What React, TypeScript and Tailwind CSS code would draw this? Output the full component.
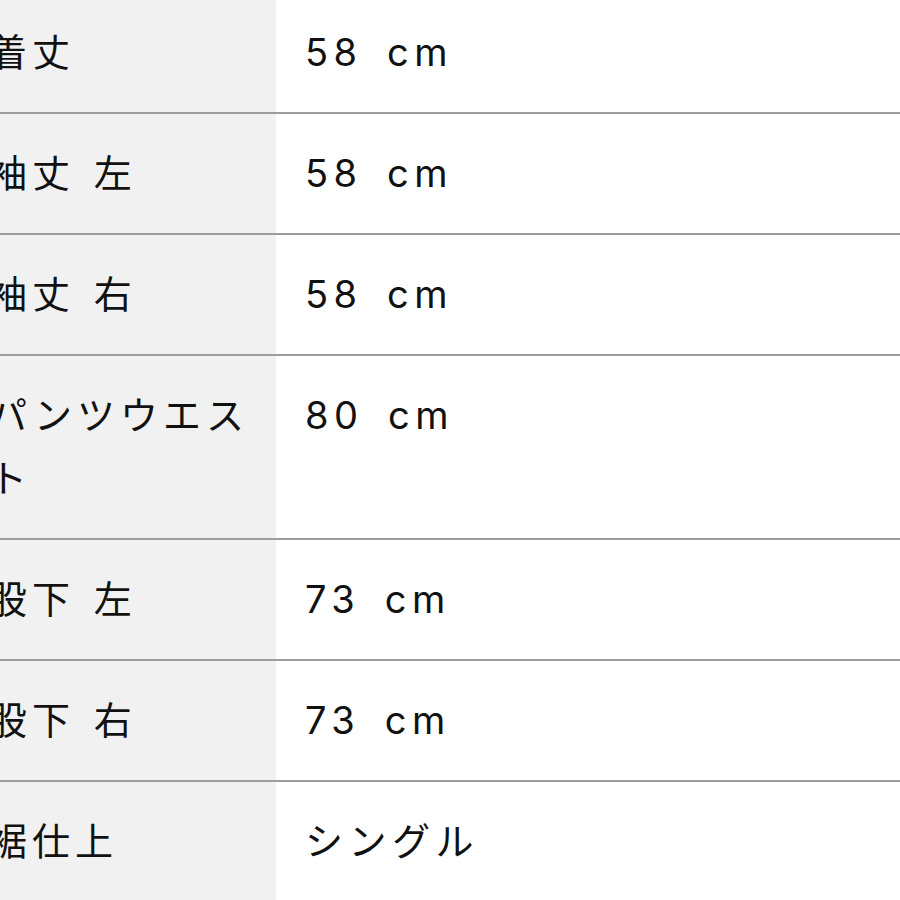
import React from "react";

const rows: { label: string; value: string }[] = [
  { label: "着丈", value: "58\u2002cm" },
  { label: "袖丈 左", value: "58\u2002cm" },
  { label: "袖丈 右", value: "58\u2002cm" },
  { label: "パンツウエスト", value: "80\u2002cm" },
  { label: "股下 左", value: "73\u2002cm" },
  { label: "股下 右", value: "73\u2002cm" },
  { label: "裾仕上", value: "シングル" },
];

export default function App() {
  return (
    <div className="w-[900px] h-[900px] overflow-hidden bg-white">
      <div
        className="-ml-[41px] -mt-[7px] w-[941px] text-[38px] leading-[63px] tracking-[5px] text-[#111111]"
        style={{ fontFamily: 'Inter, "Noto Sans CJK JP", sans-serif' }}
      >
        {rows.map((r, i) => (
          <div key={i} className="flex border-b-2 border-[#9c9c9c]">
            <div className="w-[317px] shrink-0 bg-[#f1f1f1] pl-[30px] pr-[4px] py-[28px] [word-spacing:3px]">
              {r.label}
            </div>
            <div className="flex-1 bg-white pl-[29px] py-[28px] whitespace-nowrap tracking-[5.5px]">
              {r.value}
            </div>
          </div>
        ))}
      </div>
    </div>
  );
}
